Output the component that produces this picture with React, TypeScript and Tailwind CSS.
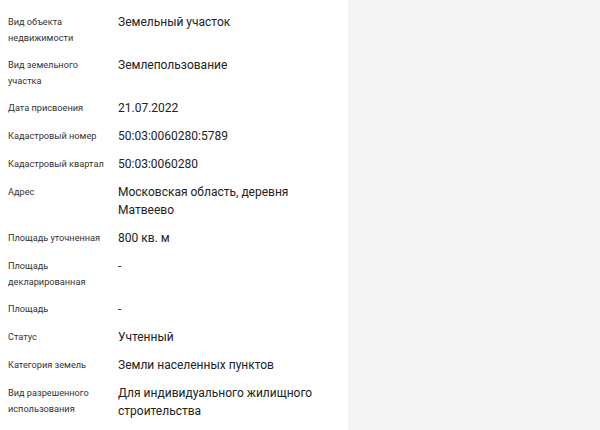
const rows: { label: string; value: string }[] = [
  { label: 'Вид объекта недвижимости', value: 'Земельный участок' },
  { label: 'Вид земельного участка', value: 'Землепользование' },
  { label: 'Дата присвоения', value: '21.07.2022' },
  { label: 'Кадастровый номер', value: '50:03:0060280:5789' },
  { label: 'Кадастровый квартал', value: '50:03:0060280' },
  { label: 'Адрес', value: 'Московская область, деревня Матвеево' },
  { label: 'Площадь уточненная', value: '800 кв. м' },
  { label: 'Площадь декларированная', value: '-' },
  { label: 'Площадь', value: '-' },
  { label: 'Статус', value: 'Учтенный' },
  { label: 'Категория земель', value: 'Земли населенных пунктов' },
  { label: 'Вид разрешенного использования', value: 'Для индивидуального жилищного строительства' },
]

export default function App() {
  return (
    <div className="flex h-[430px] w-[600px] overflow-hidden bg-white font-['Roboto',sans-serif]">
      <div className="w-[348px] shrink-0 pl-2 pt-[13px]">
        <div className="flex flex-col gap-[10px]">
          {rows.map((row) => (
            <div key={row.label} className="flex items-start">
              <div className="w-[110px] shrink-0 pt-px pr-3 text-[9.2px] leading-4 text-[#333]">
                {row.label}
              </div>
              <div className="w-[200px] text-[12px] leading-[18px] text-[#222]">{row.value}</div>
            </div>
          ))}
        </div>
      </div>
      <div className="flex-1 bg-[#f5f5f5]" />
    </div>
  )
}
